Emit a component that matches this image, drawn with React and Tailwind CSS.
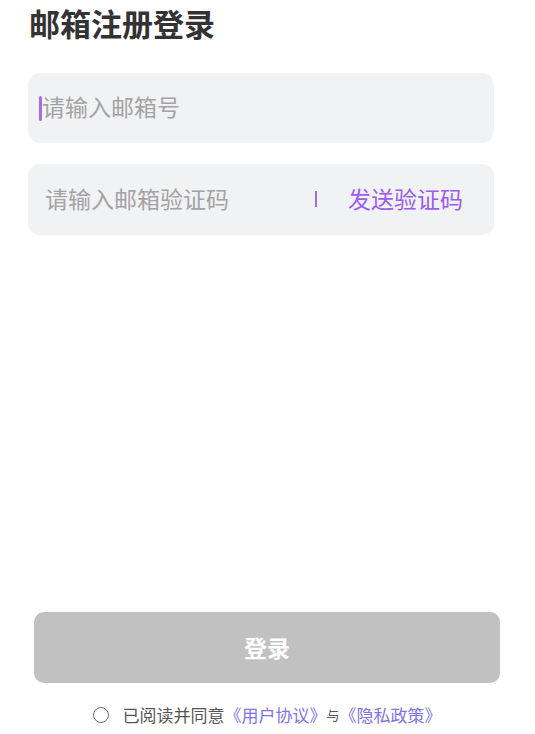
import { useState } from "react";

export default function App() {
  const [agreed, setAgreed] = useState(false);

  return (
    <div
      className="flex h-[734px] w-full flex-col bg-white"
      style={{ fontFamily: '"Noto Sans CJK SC", "Noto Sans", sans-serif' }}
    >
      <div className="px-[28px]">
        <h1 className="pl-[1px] pt-[3px] text-[31px] font-bold leading-[40px] text-[#333333]">
          邮箱注册登录
        </h1>

        <div className="mt-[30px] w-[466px]">
          <div className="flex h-[70px] items-center rounded-[12px] bg-[#f1f2f4] pb-[3px] pl-[11px]">
            <span className="mt-[3px] h-[25px] w-[3px] rounded-sm bg-[#a36bf0]" />
            <span className="text-[23px] text-[#a3a3a3]">请输入邮箱号</span>
          </div>

          <div className="mt-[21px] flex h-[71px] items-center rounded-[12px] bg-[#f1f2f4] pb-[3px] pl-[17px] pr-[31px]">
            <span className="flex-1 text-[23px] text-[#a3a3a3]">请输入邮箱验证码</span>
            <span className="mt-[2px] h-[16px] w-[2px] bg-[#a36bf0]" />
            <button className="ml-[31px] text-[23px] text-[#9c5cee]">发送验证码</button>
          </div>
        </div>
      </div>

      <div className="flex-1" />

      <div className="px-[34px]">
        <button className="flex h-[71px] w-[466px] items-center justify-center rounded-[10px] bg-[#c1c1c1] text-[23px] font-bold text-white">
          登录
        </button>
      </div>

      <div className="mt-[22px] mb-[9px] flex items-center justify-center">
        <button
          onClick={() => setAgreed(!agreed)}
          className="mr-[13px] h-[16px] w-[16px] rounded-full border-[1.5px] border-[#707070]"
        />
        <span className="text-[17px] leading-[20px] text-[#555555]">已阅读并同意</span>
        <span className="text-[17px] leading-[20px] text-[#7d74e8]">《用户协议》</span>
        <span className="text-[13px] leading-[20px] text-[#555555]">与</span>
        <span className="text-[17px] leading-[20px] text-[#7d74e8]">《隐私政策》</span>
      </div>
    </div>
  );
}
